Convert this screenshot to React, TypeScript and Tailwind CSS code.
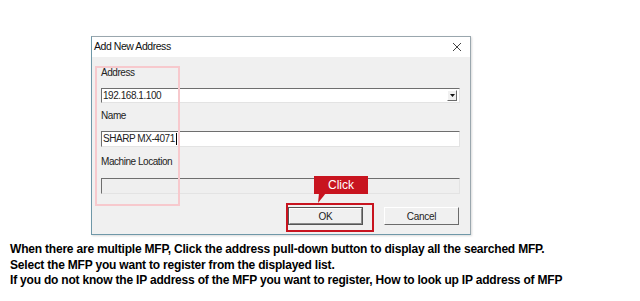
import React from "react";

const ui = { fontFamily: '"Liberation Sans", Arial, sans-serif' };
const note = { fontFamily: '"Liberation Sans", Arial, sans-serif' };

function Sunken({ children, className = "" }: { children?: React.ReactNode; className?: string }) {
  return (
    <div
      className={`flex items-center border border-t-[#6e6e6e] border-l-[#6e6e6e] border-b-[#e3e3e3] border-r-[#e3e3e3] ${className}`}
    >
      {children}
    </div>
  );
}

function Btn({ label, isDefault }: { label: string; isDefault?: boolean }) {
  return (
    <div
      className={`flex h-[18px] w-[75px] items-center justify-center bg-[#f0f0f0] text-[10px] tracking-[-0.3px] text-[#222] ${
        isDefault ? "border border-[#555]" : "border border-t-white border-l-white border-b-[#6b6b6b] border-r-[#6b6b6b]"
      }`}
    >
      {isDefault ? (
        <div className="flex h-full w-full items-center justify-center border border-t-white border-l-white border-b-[#8a8a8a] border-r-[#8a8a8a]">
          {label}
        </div>
      ) : (
        label
      )}
    </div>
  );
}

export default function App() {
  return (
    <div className="flex h-[301px] w-[640px] flex-col bg-white">
      {/* dialog */}
      <div
        style={ui}
        className="relative ml-[91px] mt-[36px] flex h-[199px] w-[380px] flex-col border border-[#9aa7ae] border-l-[#6f98a8] border-b-[#6f98a8] shadow-[1px_1px_2px_rgba(0,0,0,0.15)]"
      >
        <div className="flex h-[20px] items-center justify-between bg-white pl-[2px] pr-[8px] text-[10.5px] tracking-[-0.45px] text-[#111]">
          <span>Add New Address</span>
          <svg width="10" height="10" viewBox="0 0 10 10">
            <path d="M1 1 L9 9 M9 1 L1 9" stroke="#444" strokeWidth="1" />
          </svg>
        </div>
        <div className="flex flex-1 flex-col bg-[#f0f0f0] pl-[9px] pr-[10px] text-[10px] tracking-[-0.45px] text-[#222]">
          <div className="mt-[9px] h-[14px] leading-[14px]">Address</div>
          <Sunken className="mt-[8px] h-[15px] bg-white pl-[1px] pr-[2px]">
            <span className="flex-1 leading-[13px]">192.168.1.100</span>
            <div className="flex h-[11px] w-[10px] items-center justify-center border border-t-white border-l-white border-b-[#6b6b6b] border-r-[#6b6b6b] bg-[#f0f0f0]">
              <svg width="5" height="3" viewBox="0 0 5 3">
                <path d="M0 0 H5 L2.5 3 Z" fill="#111" />
              </svg>
            </div>
          </Sunken>
          <div className="mt-[6px] h-[14px] leading-[14px]">Name</div>
          <Sunken className="mt-[8px] h-[16px] bg-white pl-[1px]">
            <span className="leading-[14px]">SHARP MX-4071</span>
            <span className="ml-[1px] h-[12px] w-[1px] bg-black" />
          </Sunken>
          <div className="mt-[8px] h-[14px] leading-[14px]">Machine Location</div>
          <Sunken className="mt-[9px] h-[16px] bg-[#efefef]" />
          <div className="mt-[13px] flex justify-end gap-[21px] pr-[1px]">
            <Btn label="OK" isDefault />
            <Btn label="Cancel" />
          </div>
        </div>

        {/* annotations */}
        <div className="pointer-events-none absolute left-[3px] top-[29px] h-[140px] w-[85px] border-2 border-[#f7c9cd]" />
        <div className="pointer-events-none absolute left-[194px] top-[166px] h-[29px] w-[88px] border-2 border-[#c8141f]" />
        <div className="absolute left-[222px] top-[139px] flex h-[18px] w-[54px] items-center justify-center bg-[#c8141f] text-[12px] text-white">
          Click
          <svg className="absolute left-[3px] top-[17px]" width="10" height="11" viewBox="0 0 10 11">
            <path d="M2 0 L9 0 L1 10 Z" fill="#c8141f" />
          </svg>
        </div>
      </div>

      {/* notes */}
      <div style={note} className="ml-[10px] mt-[7px] text-[12px] font-bold leading-[15.5px] tracking-[-0.2px] text-black">
        <div>When there are multiple MFP, Click the address pull-down button to display all the searched MFP.</div>
        <div>Select the MFP you want to register from the displayed list.</div>
        <div>If you do not know the IP address of the MFP you want to register, How to look up IP address of MFP</div>
      </div>
    </div>
  );
}
